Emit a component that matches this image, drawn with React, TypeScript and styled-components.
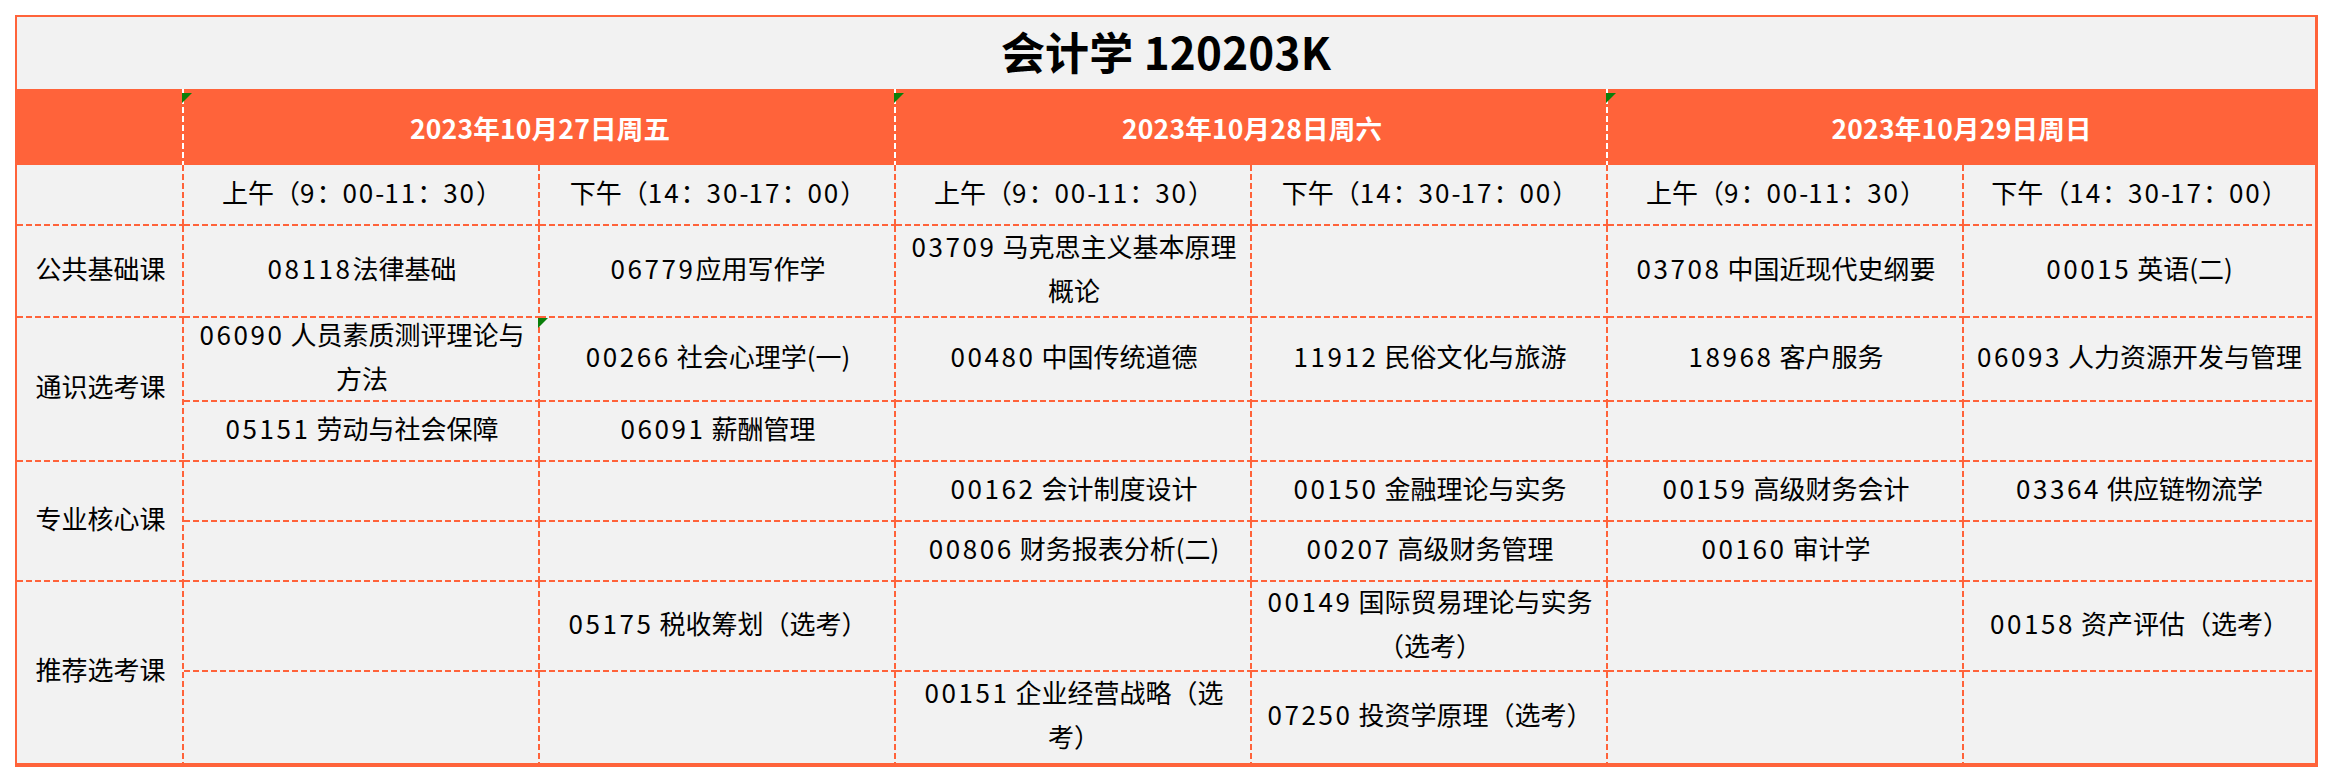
import React from "react";
import styled, { createGlobalStyle, css } from "styled-components";

const ORANGE = "#ff633a";
const BG = "#f2f2f2";

const Global = createGlobalStyle`
  html, body { margin: 0; padding: 0; background: #ffffff; }
  body { font-family: "Noto Sans CJK SC", "Noto Sans", sans-serif; color: #000; }
`;

const vLine = (c: string) =>
  `repeating-linear-gradient(to bottom, ${c} 0 6px, transparent 6px 9px) right top / 2px 100% no-repeat`;
const hLine = (c: string) =>
  `repeating-linear-gradient(to right, ${c} 0 6px, transparent 6px 9px) left bottom / 100% 2px no-repeat`;

const Page = styled.div`
  padding: 15px 0 0 15px;
`;

const Grid = styled.div`
  display: grid;
  width: max-content;
  grid-template-columns: 167px repeat(5, 356px) 351px;
  grid-template-rows: 72px 76px 61px 92px 84px 60px 60px 60px 90px 91px;
  border-style: solid;
  border-color: ${ORANGE};
  border-width: 2px 3px 4px 2px;
  background: ${BG};
`;

const Title = styled.div`
  grid-column: span 7;
  display: flex;
  align-items: center;
  justify-content: center;
  padding-bottom: 4px;
  font-size: 44px;
  font-weight: 700;
  background: ${BG};
  letter-spacing: 0.2px;
`;

const HeadCell = styled.div<{ $span?: number; $line?: boolean }>`
  position: relative;
  grid-column: span ${(p) => p.$span ?? 1};
  display: flex;
  align-items: center;
  justify-content: center;
  color: #fff;
  font-size: 26.5px;
  font-weight: 700;
  letter-spacing: 0.2px;
  background: ${(p) => (p.$line ? `${vLine("#ffffff")}, ${ORANGE}` : ORANGE)};
`;

type CellProps = { $rows?: number; $noRight?: boolean; $noBottom?: boolean };

const cellBase = css<CellProps>`
  position: relative;
  grid-row: span ${(p) => p.$rows ?? 1};
  display: flex;
  align-items: center;
  justify-content: center;
  padding: 0 6px 8px 6px;
  box-sizing: border-box;
  background: ${(p) =>
    [
      p.$noRight ? null : vLine(ORANGE),
      p.$noBottom ? null : hLine(ORANGE),
      BG,
    ]
      .filter(Boolean)
      .join(", ")};
`;

const TimeCell = styled.div<CellProps>`
  ${cellBase}
  padding-bottom: 7px;
`;

const Label = styled.div<CellProps>`
  ${cellBase}
`;

const Course = styled.div<CellProps>`
  ${cellBase}
`;

const Text = styled.div`
  text-align: center;
  white-space: pre-line;
  font-size: 26px;
  line-height: 44px;
`;

const Num = styled.span<{ $gap: number }>`
  letter-spacing: ${(p) => p.$gap}px;
`;

const Flag = styled.span<{ $top: number }>`
  position: absolute;
  left: -2px;
  top: ${(p) => p.$top}px;
  width: 10px;
  height: 10px;
  background: #0a7f0a;
  clip-path: polygon(0 0, 100% 0, 0 100%);
`;

const withNums = (s: string, gap: number) => (
  <Text>
    {s.split(/(\d+)/).map((part, i) =>
      /^\d+$/.test(part) ? (
        <Num key={i} $gap={gap}>
          {part}
        </Num>
      ) : (
        <React.Fragment key={i}>{part}</React.Fragment>
      )
    )}
  </Text>
);

const days = ["2023年10月27日周五", "2023年10月28日周六", "2023年10月29日周日"];
const times = ["上午（9：00-11：30）", "下午（14：30-17：00）"];

type Group = { label: string; rows: string[][]; flags?: [number, number][] };

const groups: Group[] = [
  {
    label: "公共基础课",
    rows: [
      [
        "08118法律基础",
        "06779应用写作学",
        "03709 马克思主义基本原理\n概论",
        "",
        "03708 中国近现代史纲要",
        "00015 英语(二)",
      ],
    ],
  },
  {
    label: "通识选考课",
    rows: [
      [
        "06090 人员素质测评理论与\n方法",
        "00266 社会心理学(一)",
        "00480 中国传统道德",
        "11912 民俗文化与旅游",
        "18968 客户服务",
        "06093 人力资源开发与管理",
      ],
      ["05151 劳动与社会保障", "06091 薪酬管理", "", "", "", ""],
    ],
    flags: [[0, 1]],
  },
  {
    label: "专业核心课",
    rows: [
      ["", "", "00162 会计制度设计", "00150 金融理论与实务", "00159 高级财务会计", "03364 供应链物流学"],
      ["", "", "00806 财务报表分析(二)", "00207 高级财务管理", "00160 审计学", ""],
    ],
  },
  {
    label: "推荐选考课",
    rows: [
      ["", "05175 税收筹划（选考）", "", "00149 国际贸易理论与实务\n（选考）", "", "00158 资产评估（选考）"],
      ["", "", "00151 企业经营战略（选\n考）", "07250 投资学原理（选考）", "", ""],
    ],
  },
];

export default function App() {
  return (
    <>
      <Global />
      <Page>
        <Grid>
          <Title>会计学 120203K</Title>

          <HeadCell $line />
          {days.map((d, i) => (
            <HeadCell key={d} $span={2} $line={i < 2}>
              <Flag $top={4} />
              {d}
            </HeadCell>
          ))}

          <TimeCell />
          {days.flatMap((_, di) =>
            times.map((t, ti) => (
              <TimeCell key={`${di}-${ti}`} $noRight={di === 2 && ti === 1}>
                {withNums(t, 2)}
              </TimeCell>
            ))
          )}

          {groups.map((g, gi) => {
            const lastGroup = gi === groups.length - 1;
            return (
              <React.Fragment key={g.label}>
                <Label $rows={g.rows.length} $noBottom={lastGroup}>
                  <Text>{g.label}</Text>
                </Label>
                {g.rows.map((r, ri) =>
                  r.map((txt, ci) => {
                    const flag = g.flags?.some(([fr, fc]) => fr === ri && fc === ci);
                    return (
                      <Course
                        key={`${gi}-${ri}-${ci}`}
                        $noRight={ci === 5}
                        $noBottom={lastGroup && ri === g.rows.length - 1}
                      >
                        {flag && <Flag $top={0} />}
                        {txt && withNums(txt, 2.6)}
                      </Course>
                    );
                  })
                )}
              </React.Fragment>
            );
          })}
        </Grid>
      </Page>
    </>
  );
}
